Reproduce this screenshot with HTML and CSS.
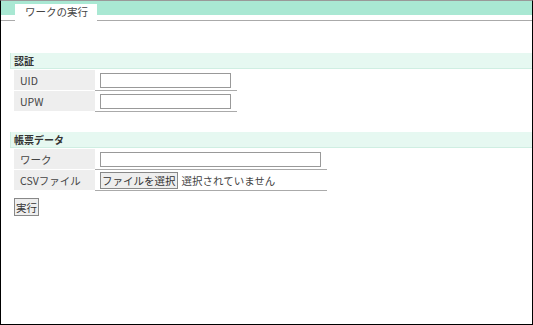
FILE: index.html
```html
<!DOCTYPE html>
<html lang="ja">
<head>
<meta charset="utf-8">
<link rel="stylesheet" href="styles.css">
</head>
<body>
<div class="frame">
  <div class="tabbar">
    <div class="tab">ワークの実行</div>
  </div>
  <div class="content">
    <div class="section">
      <div class="section-title">認証</div>
      <table class="form">
        <tr><th>UID</th><td><input type="text" class="short"></td></tr>
        <tr><th>UPW</th><td><input type="password" class="short"></td></tr>
      </table>
    </div>
    <div class="section">
      <div class="section-title">帳票データ</div>
      <table class="form">
        <tr><th>ワーク</th><td><input type="text" class="long"></td></tr>
        <tr><th>CSVファイル</th><td><span class="filebtn">ファイルを選択</span><span class="filetext">選択されていません</span></td></tr>
      </table>
    </div>
    <button class="run">実行</button>
  </div>
</div>
</body>
</html>
```
FILE: styles.css
```css
* { box-sizing: border-box; }
html, body { margin: 0; padding: 0; background: #fff; }
body {
  font-family: "Noto Sans CJK JP", "Open Sans", sans-serif;
  font-size: 10.5px;
  color: #333;
}
.frame {
  width: 533px;
  height: 325px;
  border: 1px solid #000;
  border-top-color: #999;
  overflow: hidden;
}
.tabbar {
  height: 20px;
  background: linear-gradient(#a9e8d3 0, #a9e8d3 14px, #fff 14px);
  border-bottom: 1px solid #aaa;
  padding-left: 14px;
  display: flex;
  align-items: flex-end;
}
.tab {
  background: #fff;
  height: 17px;
  margin-bottom: -1px;
  padding: 0 9px 0 10px;
  line-height: 16px;
  font-size: 10.5px;
  color: #444;
}
.content {
  padding: 32px 0 0 9px;
}
.section { margin-bottom: 20px; }
.section-title {
  background: #e6f8f1;
  border-left: 1px solid #cfeee2;
  border-bottom: 1px solid #cfeee2;
  height: 16px;
  line-height: 15px;
  padding-left: 3px;
  font-weight: bold;
  font-size: 10px;
  color: #333;
  margin-bottom: 1px;
}
.form {
  border-collapse: separate;
  border-spacing: 0;
  margin-left: 4px;
}
.form th {
  background: #eeeeee;
  font-weight: normal;
  text-align: left;
  width: 81px;
  padding: 0 6px;
  height: 21px;
  border-bottom: 1px solid #fff;
  color: #444;
}
.form td {
  padding: 0 6px 0 5px;
  border-bottom: 1px solid #aaa;
  height: 21px;
}
input {
  height: 15px;
  border: 1px solid #999;
  padding: 0;
  margin: 0;
  display: block;
}
.short { width: 131px; }
.long { width: 221px; }
.filebtn {
  display: inline-block;
  border: 1px solid #888;
  background: #eee;
  padding: 0 1px;
  line-height: 15px;
  height: 17px;
  color: #333;
  margin-right: 4px;
  vertical-align: middle;
}
.filetext { vertical-align: middle; color: #444; }
.run {
  display: block;
  margin: -13px 0 0 4px;
  font-family: inherit;
  font-size: 10.5px;
  border: 1px solid #888;
  background: #eee;
  padding: 0 1px;
  height: 18px;
  line-height: 15px;
  color: #333;
}
```
